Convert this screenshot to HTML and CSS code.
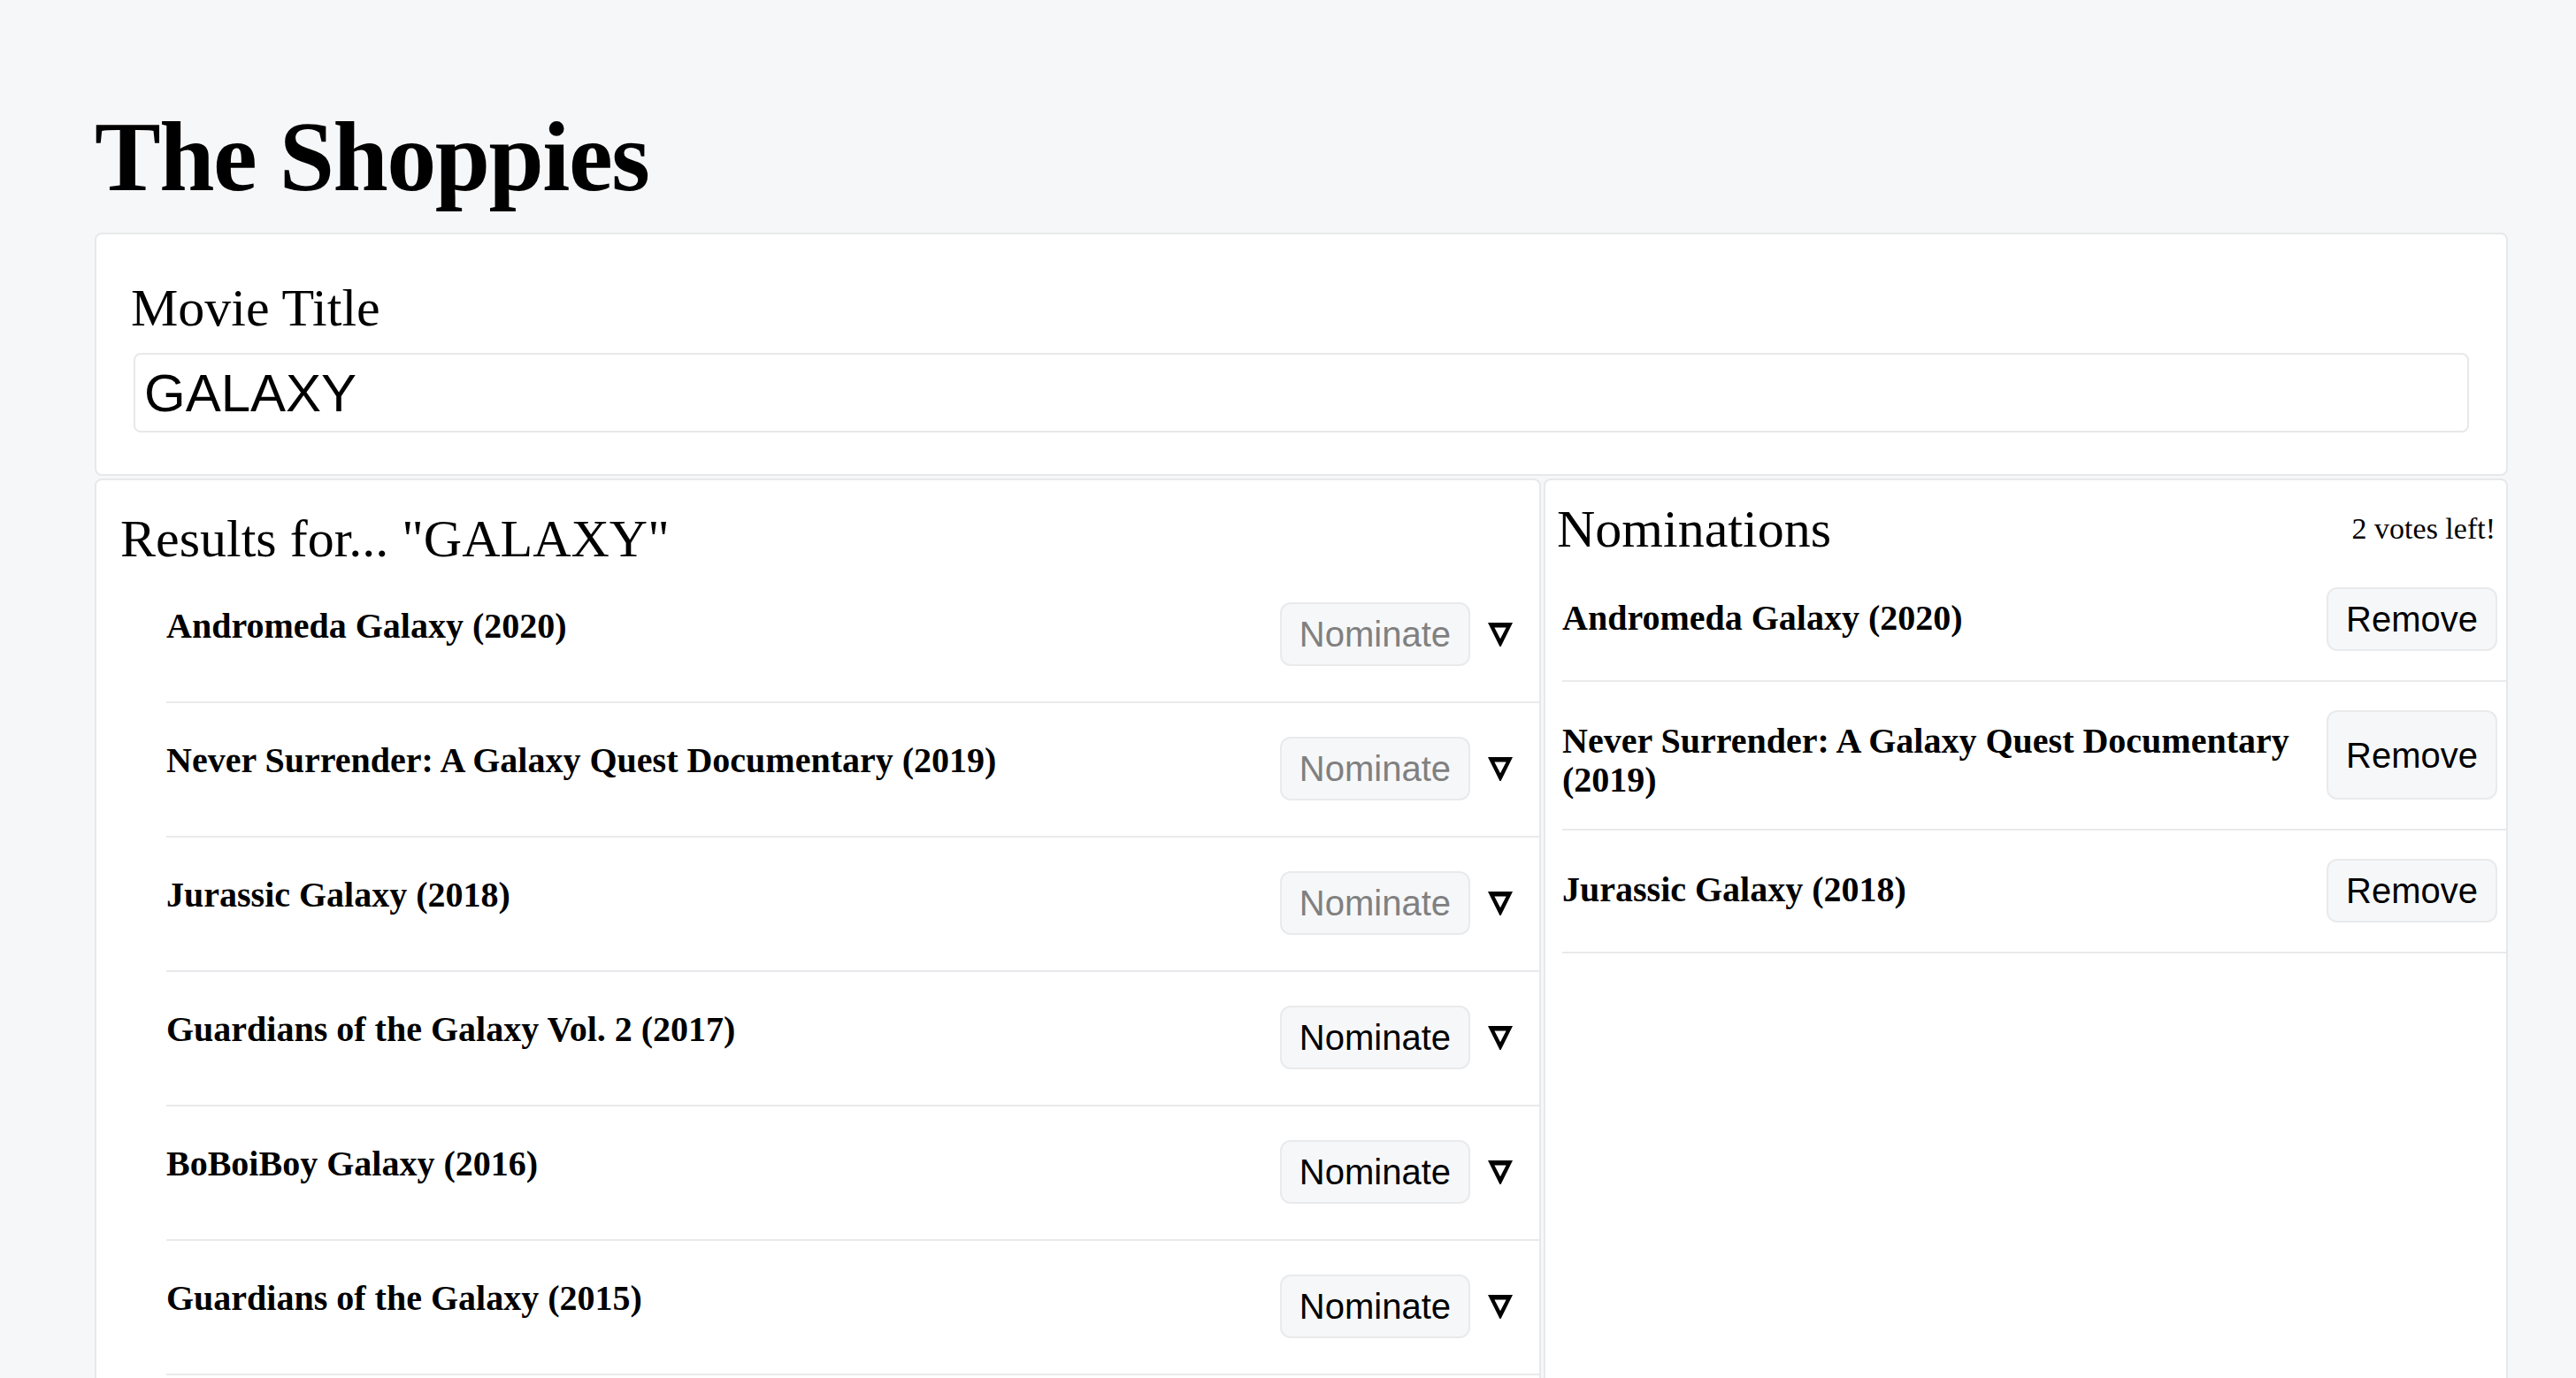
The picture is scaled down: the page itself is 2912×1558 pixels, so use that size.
FILE: index.html
```html
<!DOCTYPE html>
<html lang="en">
<head>
<meta charset="utf-8">
<title>The Shoppies</title>
<link rel="stylesheet" href="styles.css">
</head>
<body>
<main class="page">
  <h1 class="page-title">The Shoppies</h1>

  <section class="card search-card">
    <label class="search-label" for="movie-title">Movie Title</label>
    <input class="search-input" id="movie-title" type="text" value="GALAXY">
  </section>

  <div class="panes">
    <section class="card results-card">
      <h2 class="pane-title results-title">Results for... "GALAXY"</h2>
      <ul class="result-list">
        <li class="result-row">
          <span class="movie-title result-name">Andromeda Galaxy (2020)</span>
          <div class="row-actions">
            <button class="btn" disabled>Nominate</button>
            <span class="toggle"><svg width="28" height="27" viewBox="0 0 28 27"><path fill-rule="evenodd" d="M0 0H28L14.6 27H13.4ZM7.4 5.5H20.6L14 18.3Z"/></svg></span>
          </div>
        </li>
        <li class="result-row">
          <span class="movie-title result-name">Never Surrender: A Galaxy Quest Documentary (2019)</span>
          <div class="row-actions">
            <button class="btn" disabled>Nominate</button>
            <span class="toggle"><svg width="28" height="27" viewBox="0 0 28 27"><path fill-rule="evenodd" d="M0 0H28L14.6 27H13.4ZM7.4 5.5H20.6L14 18.3Z"/></svg></span>
          </div>
        </li>
        <li class="result-row">
          <span class="movie-title result-name">Jurassic Galaxy (2018)</span>
          <div class="row-actions">
            <button class="btn" disabled>Nominate</button>
            <span class="toggle"><svg width="28" height="27" viewBox="0 0 28 27"><path fill-rule="evenodd" d="M0 0H28L14.6 27H13.4ZM7.4 5.5H20.6L14 18.3Z"/></svg></span>
          </div>
        </li>
        <li class="result-row">
          <span class="movie-title result-name">Guardians of the Galaxy Vol. 2 (2017)</span>
          <div class="row-actions">
            <button class="btn">Nominate</button>
            <span class="toggle"><svg width="28" height="27" viewBox="0 0 28 27"><path fill-rule="evenodd" d="M0 0H28L14.6 27H13.4ZM7.4 5.5H20.6L14 18.3Z"/></svg></span>
          </div>
        </li>
        <li class="result-row">
          <span class="movie-title result-name">BoBoiBoy Galaxy (2016)</span>
          <div class="row-actions">
            <button class="btn">Nominate</button>
            <span class="toggle"><svg width="28" height="27" viewBox="0 0 28 27"><path fill-rule="evenodd" d="M0 0H28L14.6 27H13.4ZM7.4 5.5H20.6L14 18.3Z"/></svg></span>
          </div>
        </li>
        <li class="result-row">
          <span class="movie-title result-name">Guardians of the Galaxy (2015)</span>
          <div class="row-actions">
            <button class="btn">Nominate</button>
            <span class="toggle"><svg width="28" height="27" viewBox="0 0 28 27"><path fill-rule="evenodd" d="M0 0H28L14.6 27H13.4ZM7.4 5.5H20.6L14 18.3Z"/></svg></span>
          </div>
        </li>
      </ul>
    </section>

    <section class="card nominations-card">
      <header class="nom-header">
        <h2 class="pane-title">Nominations</h2>
        <span class="votes-left">2 votes left!</span>
      </header>
      <ul class="nom-list">
        <li class="nom-row">
          <span class="movie-title nom-name">Andromeda Galaxy (2020)</span>
          <button class="btn btn-dark">Remove</button>
        </li>
        <li class="nom-row">
          <span class="movie-title nom-name">Never Surrender: A Galaxy Quest Documentary (2019)</span>
          <button class="btn btn-dark">Remove</button>
        </li>
        <li class="nom-row">
          <span class="movie-title nom-name">Jurassic Galaxy (2018)</span>
          <button class="btn btn-dark">Remove</button>
        </li>
      </ul>
    </section>
  </div>
</main>
</body>
</html>
```

FILE: styles.css
```css
* {
  box-sizing: border-box;
}

html, body {
  margin: 0;
  padding: 0;
}

body {
  background: #f6f7f9;
  color: #000;
  font-family: "Liberation Serif", "Times New Roman", serif;
}

.page {
  padding: 109px 77px 0 107px;
}

.page-title {
  margin: 0 0 18px;
  font-size: 112px;
  line-height: 136px;
  font-weight: bold;
  letter-spacing: -1.5px;
}

.card {
  background: #fff;
  border: 2px solid #e7e8ea;
  border-radius: 8px;
}

.search-card {
  padding: 49px 42px 47px 42px;
}

.search-label {
  display: block;
  font-size: 60px;
  line-height: 68px;
  margin: 0 0 17px -3px;
}

.search-input {
  display: block;
  width: 100%;
  height: 90px;
  margin: 0;
  padding: 0 10px;
  border: 2px solid #e7e8ea;
  border-radius: 8px;
  background: #fff;
  color: #000;
  font-family: "Liberation Sans", Arial, sans-serif;
  font-size: 60px;
  outline: none;
}

.panes {
  display: grid;
  grid-template-columns: 3fr 2fr;
  gap: 3px;
  margin-top: 3px;
  height: 1100px;
}

.pane-title {
  margin: 0;
  font-size: 60px;
  line-height: 68px;
  font-weight: normal;
}

.results-card {
  padding-top: 32px;
}

.results-title {
  margin-left: 27px;
}

.result-list,
.nom-list {
  list-style: none;
  margin: 0;
  padding: 0;
}

.result-list {
  margin-left: 79px;
}

.result-row {
  display: flex;
  justify-content: space-between;
  align-items: flex-start;
  padding: 38px 30px 40px 0;
  border-bottom: 2px solid #e9eaec;
}

.movie-title {
  font-size: 40px;
  line-height: 44px;
  font-weight: bold;
}

.result-name {
  padding-top: 5px;
}

.row-actions {
  display: flex;
  align-items: center;
  flex-shrink: 0;
}

.toggle {
  display: flex;
  margin-left: 20px;
}

.btn {
  margin: 0;
  padding: 11px 20px;
  border: 2px solid #e9eaec;
  border-radius: 12px;
  background: #f6f7f9;
  color: #000;
  font-family: "Liberation Sans", Arial, sans-serif;
  font-size: 40px;
  line-height: 46px;
  white-space: nowrap;
}

.btn:disabled {
  color: #808080;
}

.nom-header {
  display: flex;
  justify-content: space-between;
  align-items: center;
  padding: 21px 12px 0 13px;
}

.votes-left {
  font-size: 34px;
}

.nom-list {
  margin-left: 19px;
}

.nom-row {
  display: flex;
  justify-content: space-between;
  align-items: stretch;
  gap: 24px;
  padding: 32px 10px 33px 0;
  border-bottom: 2px solid #e9eaec;
}

.nom-name {
  padding: 13px 0 0;
}

.nom-row .btn {
  flex-shrink: 0;
}
```
